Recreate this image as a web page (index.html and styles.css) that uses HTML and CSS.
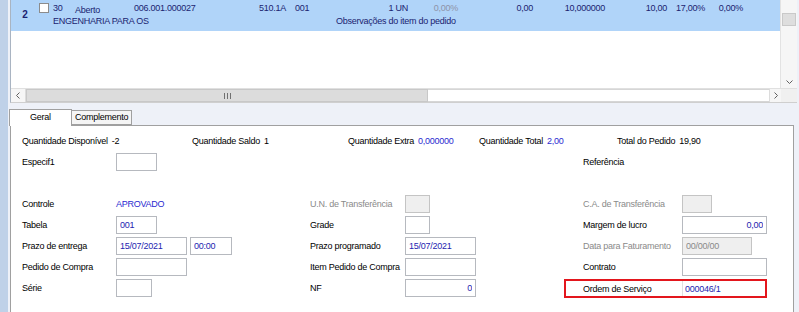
FILE: index.html
```html
<!DOCTYPE html>
<html lang="pt-BR">
<head>
  <meta charset="UTF-8">
  <title>Pedido - Itens</title>
  <link rel="stylesheet" href="styles.css">
</head>
<body>
<div class="app">
  <div class="side"></div>
  <div class="main">

    <div class="grid">
      <div class="grid-body">
        <div class="rows">
          <div class="row sel">
            <span class="rn">2</span>
            <span class="chk"><i></i></span>
            <span>30</span>
            <span class="low">Aberto</span>
            <span>006.001.000027</span>
            <span>510.1A</span>
            <span>001</span>
            <span class="r">1 UN</span>
            <span class="r dim">0,00%</span>
            <span class="r">0,00</span>
            <span class="r">10,000000</span>
            <span class="r">10,00</span>
            <span class="r">17,00%</span>
            <span class="r">0,00%</span>
            <span class="desc">ENGENHARIA PARA OS</span>
            <span class="obs">Observações do item do pedido</span>
          </div>
        </div>
        <div class="vscroll">
          <div class="vs-top"></div>
          <div class="vs-thumb"></div>
          <div class="vs-fill"></div>
          <div class="vs-arrow">
            <svg width="7" height="4" viewBox="0 0 7 4"><polyline points="0.5,0.5 3.5,3.5 6.5,0.5" fill="none" stroke="#606060" stroke-width="1"/></svg>
          </div>
        </div>
      </div>
      <div class="hscroll">
        <div class="hs-arrow">
          <svg width="4" height="7" viewBox="0 0 4 7"><polyline points="3.5,0.5 0.5,3.5 3.5,6.5" fill="none" stroke="#606060" stroke-width="1"/></svg>
        </div>
        <div class="hs-thumb">
          <svg width="7" height="6" viewBox="0 0 7 6"><path d="M0.5 0v6M3.5 0v6M6.5 0v6" stroke="#707070" stroke-width="1"/></svg>
        </div>
        <div class="hs-track"></div>
        <div class="hs-arrow right">
          <svg width="4" height="7" viewBox="0 0 4 7"><polyline points="0.5,0.5 3.5,3.5 0.5,6.5" fill="none" stroke="#606060" stroke-width="1"/></svg>
        </div>
        <div class="hs-corner"></div>
      </div>
    </div>

    <div class="tabs">
      <div class="tab active">Geral</div>
      <div class="tab">Complemento</div>
    </div>

    <div class="panel">
      <div class="totals">
        <div class="tot g1"><span class="tl">Quantidade Disponível</span><span>-2</span></div>
        <div class="tot g2"><span class="tl">Quantidade Saldo</span><span>1</span></div>
        <div class="tot g3"><span class="tl">Quantidade Extra</span><span class="blue">0,000000</span></div>
        <div class="tot g4"><span class="tl">Quantidade Total</span><span class="blue">2,00</span></div>
        <div class="tot g5"><span class="tl">Total do Pedido</span><span>19,90</span></div>
      </div>

      <div class="form">
        <span>Especif1</span>
        <span class="fld"><input class="inp w41" type="text" value="" readonly></span>
        <span></span>
        <span></span>
        <span>Referência</span>
        <span></span>

        <span></span><span></span><span></span><span></span><span></span><span></span>

        <span>Controle</span>
        <span class="blue">APROVADO</span>
        <span class="grey">U.N. de Transferência</span>
        <span class="fld"><input class="inp w25 off" type="text" value="" readonly></span>
        <span class="grey">C.A. de Transferência</span>
        <span class="fld"><input class="inp w30 off" type="text" value="" readonly></span>

        <span>Tabela</span>
        <span class="fld"><input class="inp w41" type="text" value="001" readonly></span>
        <span>Grade</span>
        <span class="fld"><input class="inp w25" type="text" value="" readonly></span>
        <span>Margem de lucro</span>
        <span class="fld"><input class="inp w85 num" type="text" value="0,00" readonly></span>

        <span>Prazo de entrega</span>
        <span class="fld"><input class="inp w71" type="text" value="15/07/2021" readonly><input class="inp w42" type="text" value="00:00" readonly></span>
        <span>Prazo programado</span>
        <span class="fld"><input class="inp w71" type="text" value="15/07/2021" readonly></span>
        <span class="grey">Data para Faturamento</span>
        <span class="fld"><input class="inp w70 off" type="text" value="00/00/00" readonly></span>

        <span>Pedido de Compra</span>
        <span class="fld"><input class="inp w71" type="text" value="" readonly></span>
        <span>Item Pedido de Compra</span>
        <span class="fld"><input class="inp w71" type="text" value="" readonly></span>
        <span>Contrato</span>
        <span class="fld"><input class="inp w85" type="text" value="" readonly></span>

        <span>Série</span>
        <span class="fld"><input class="inp w36" type="text" value="" readonly></span>
        <span>NF</span>
        <span class="fld"><input class="inp w71 num" type="text" value="0" readonly></span>
        <div class="os">
          <span class="os-label">Ordem de Serviço</span>
          <input class="os-inp" type="text" value="000046/1" readonly>
        </div>
      </div>
    </div>

  </div>
</div>
</body>
</html>
```

FILE: styles.css
```css
body { margin: 0; font: 9px "Liberation Sans", Arial, sans-serif; letter-spacing: -0.25px; background: #eef1f8; color: #000; }
.app { display: flex; height: 312px; overflow: hidden; }
.side { width: 8px; flex: none; background: #bfd1e8; }
.main { flex: 1; padding: 0 2px; }

/* item grid */
.grid { height: 103px; display: flex; flex-direction: column; background: #fff; border-left: 1px solid #a9b4c2; border-bottom: 1px solid #cfcfcf; box-sizing: border-box; }
.grid-body { flex: 1; display: flex; min-height: 0; }
.rows { flex: 1; }
.row { display: grid; grid-template-columns: 28px 14px 22px 59px 125px 36px 55px 58px 50px 75px 72px 62px 38px 38px; grid-template-rows: 12px 12px; row-gap: 1px; height: 31px; padding-top: 2px; box-sizing: border-box; line-height: 12px; color: #1a2370; white-space: nowrap; }
.row.sel { background: #b0d4f9; }
.rn { grid-row: 1 / 3; align-self: center; text-align: center; font-weight: bold; font-size: 10px; }
.chk i { display: block; width: 10px; height: 10px; margin-top: 1px; box-sizing: border-box; border: 1px solid #8c8c8c; background: #fff; }
.low { padding-top: 2px; }
.r { text-align: right; }
.dim { color: #8e93a8; }
.desc { grid-column: 3 / 7; }
.obs { grid-column: 7 / -1; padding-left: 41px; }

.vscroll { width: 16px; flex: none; display: flex; flex-direction: column; background: #f6f6f6; border-left: 1px solid #e3e3e3; }
.vs-top { height: 13px; }
.vs-thumb { height: 13px; margin: 0 1px; box-sizing: border-box; background: #dedede; border: 1px solid #c9c9c9; }
.vs-fill { flex: 1; }
.vs-arrow { height: 12px; display: flex; align-items: center; justify-content: center; }

.hscroll { height: 13px; display: flex; border-top: 1px solid #e0e0e0; }
.hs-arrow { width: 14px; display: flex; align-items: center; justify-content: center; background: #f6f6f6; border-right: 1px solid #dcdcdc; }
.hs-arrow.right { width: 11px; border-right: none; border-left: 1px solid #dcdcdc; }
.hs-thumb { width: 402px; display: flex; align-items: center; justify-content: center; background: #dcdcdc; border: 1px solid #c8c8c8; box-sizing: border-box; }
.hs-track { flex: 1; background: #fff; border-top: 1px solid #d6d6d6; border-bottom: 1px solid #d6d6d6; }
.hs-corner { width: 16px; background: #f0f0f0; }

/* tabs */
.tabs { display: flex; align-items: flex-end; height: 17px; margin: 6px 0 -1px -1px; position: relative; z-index: 1; }
.tab { height: 13px; line-height: 13px; padding: 0 3px; background: #f5f5f5; border: 1px solid #a0a0a0; border-left: none; margin-bottom: 1px; }
.tab.active { width: 63px; height: 17px; line-height: 15px; padding: 0; text-align: center; background: #fff; border-left: 1px solid #a0a0a0; border-bottom: none; margin-bottom: 0; box-sizing: border-box; }

/* form panel */
.panel { height: 200px; margin-right: 3px; padding: 8px 0 0 11px; background: #fff; border: 1px solid #a0a0a0; }
.totals { display: flex; height: 14px; line-height: 14px; white-space: nowrap; }
.tot { display: flex; }
.tl { margin-right: 4px; }
.g1 { width: 170px; }
.g2 { width: 156px; }
.g3 { width: 131px; }
.g4 { width: 138px; }

.form { display: grid; grid-template-columns: 94px 194px 95px 178px 99px 1fr; grid-auto-rows: 18px; row-gap: 3px; margin-top: 5px; align-items: center; white-space: nowrap; }
.fld { display: flex; gap: 3px; }
.blue { color: #2a2ad0; }
.grey { color: #8a8a8a; }

.inp { height: 18px; box-sizing: border-box; padding: 0 3px; border: 1px solid #b6b9bf; background: #fff; color: #2424b0; font: 9px "Liberation Sans", Arial, sans-serif; letter-spacing: -0.25px; outline: none; }
.inp.off { background: #efefef; border-color: #c4c4c4; color: #8a8a8a; }
.inp.num { text-align: right; }
.w25 { width: 25px; } .w30 { width: 30px; } .w36 { width: 36px; } .w41 { width: 41px; }
.w42 { width: 42px; } .w70 { width: 70px; } .w71 { width: 71px; } .w85 { width: 85px; }

.os { grid-column: 5 / 7; align-self: start; display: flex; align-items: center; width: 203px; height: 19px; margin-left: -19px; padding-left: 17px; box-sizing: border-box; border: 2px solid #e3161d; }
.os-label { width: 99px; flex: none; }
.os-inp { width: 83px; height: 15px; box-sizing: border-box; padding: 0 2px; border: none; border-left: 1px solid #e0e0e0; color: #2424b0; font: 9px "Liberation Sans", Arial, sans-serif; letter-spacing: -0.25px; outline: none; }
```
